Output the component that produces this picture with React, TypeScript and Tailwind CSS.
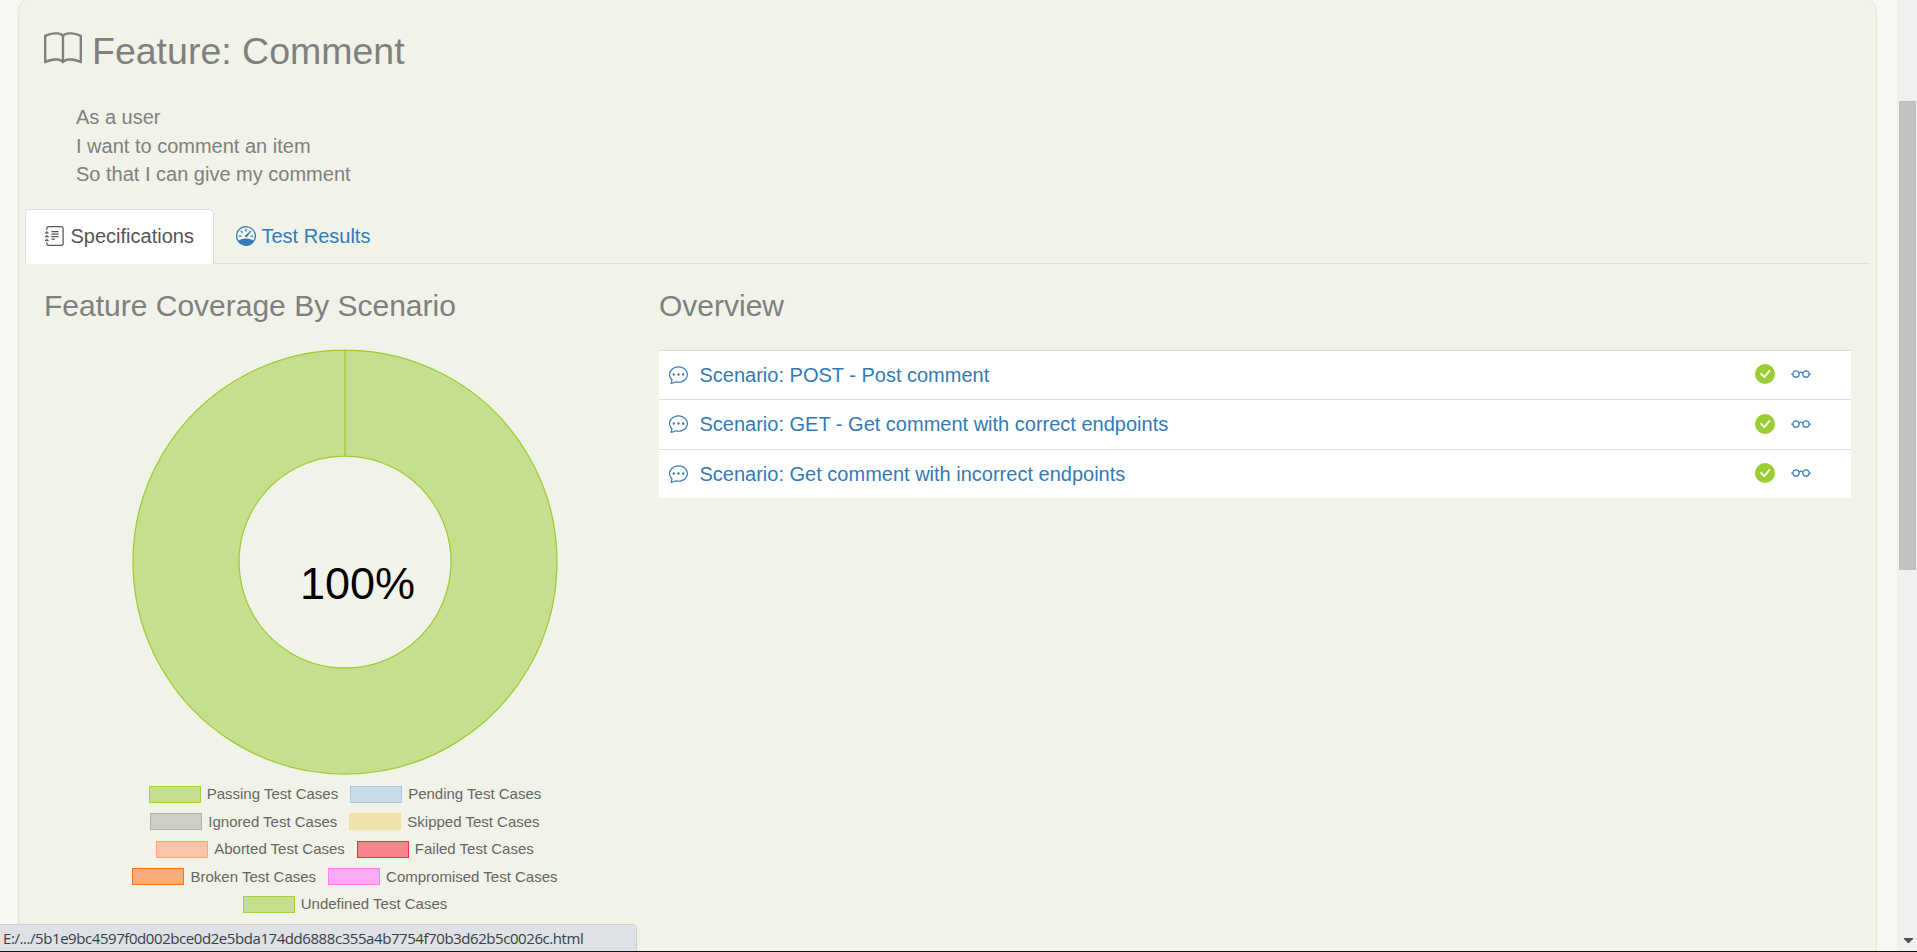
import React from "react";
import {
  BsBook,
  BsJournalText,
  BsSpeedometer,
  BsChatDots,
  BsCheckCircleFill,
  BsEyeglasses,
} from "react-icons/bs";

const scenarios = [
  "Scenario: POST - Post comment",
  "Scenario: GET - Get comment with correct endpoints",
  "Scenario: Get comment with incorrect endpoints",
];

const legend = [
  [
    { label: "Passing Test Cases", swatch: "bg-[#c6df8f] border-[#9fd23e]" },
    { label: "Pending Test Cases", swatch: "bg-[#cbdce9] border-[#a5c8ef]" },
  ],
  [
    { label: "Ignored Test Cases", swatch: "bg-[#cdcec8] border-[#b0b0ae]" },
    { label: "Skipped Test Cases", swatch: "bg-[#eee4ab] border-[#eee0a0]" },
  ],
  [
    { label: "Aborted Test Cases", swatch: "bg-[#f8c6a7] border-[#fea572]" },
    { label: "Failed Test Cases", swatch: "bg-[#f8858d] border-[#fb2a43]" },
  ],
  [
    { label: "Broken Test Cases", swatch: "bg-[#f8ab7b] border-[#fd6f1c]" },
    { label: "Compromised Test Cases", swatch: "bg-[#f9acf3] border-[#fc7cfb]" },
  ],
  [{ label: "Undefined Test Cases", swatch: "bg-[#c6df8f] border-[#9fd23e]" }],
];

function Coverage() {
  return (
    <section className="w-[615px] shrink-0 pl-[19px]">
      <h3 className="text-[30px] leading-[33px] text-[#808080]">Feature Coverage By Scenario</h3>
      <div className="mt-[27px] flex w-[602px] flex-col items-center">
        <svg width="426" height="426" viewBox="0 0 426 426" className="block">
          <path
            d="M213 1A212 212 0 1 1 212.99 1V107A106 106 0 1 0 213 107Z"
            fill="#c6df8f"
            stroke="#9acd32"
            strokeWidth="1.25"
          />
          <text x="168" y="250" fontSize="45" fill="#000" className="font-['Liberation_Sans',Arial,sans-serif]">
            100%
          </text>
        </svg>
        <div className="mt-[11px] flex flex-col items-center">
          {legend.map((row, i) => (
            <div key={i} className="flex h-[27.5px] items-start gap-[12px]">
              {row.map((item) => (
                <div key={item.label} className="flex items-center gap-[6px]">
                  <span className={`h-[17px] w-[52px] border ${item.swatch}`} />
                  <span className="whitespace-nowrap text-[15px] leading-[16px] text-[#666]">{item.label}</span>
                </div>
              ))}
            </div>
          ))}
        </div>
      </div>
    </section>
  );
}

function Overview() {
  return (
    <section className="min-w-0 flex-1 pl-[19px] pr-[19px]">
      <h3 className="text-[30px] leading-[33px] text-[#808080]">Overview</h3>
      <ul className="mt-[28px]">
        {scenarios.map((name) => (
          <li key={name} className="flex h-[49.5px] items-center border-t border-[#ddd] bg-white pl-[10px] text-[#337ab7]">
            <BsChatDots className="mb-px size-[19px]" />
            <a className="ml-[11.5px] flex-1 pt-px text-[20px] leading-[29px]">{name}</a>
            <BsCheckCircleFill className="mb-px size-[20px] text-[#9acd32]" />
            <BsEyeglasses className="mb-px ml-[16px] mr-[40px] size-[20px]" />
          </li>
        ))}
      </ul>
    </section>
  );
}

export default function App() {
  return (
    <div className="relative flex h-[952px] w-[1917px] overflow-hidden bg-[#f7f8f3] font-['Liberation_Sans',Arial,sans-serif]">
      <main className="ml-[18px] mt-[-3px] h-[970px] w-[1859px] shrink-0 rounded-t-[14px] border border-[#e3e4dc] bg-[#f1f2e8] px-[6px]">
        <div className="flex pl-[19px] pt-[31px] text-[#808080]">
          <BsBook className="mt-px size-[38px]" />
          <h2 className="ml-[10px] mt-[2px] text-[37.5px] leading-[41px]">Feature: Comment</h2>
        </div>
        <p className="mt-[31px] whitespace-pre-line pl-[51px] text-[20px] leading-[28.57px] text-[#808080]">
          {"As a user\nI want to comment an item\nSo that I can give my comment"}
        </p>
        <nav className="mt-[20px] flex h-[55px] border-b border-[#ddd] text-[20px] leading-[28px]">
          <a className="flex h-[55px] w-[189px] items-center rounded-t-[5px] border border-b-0 border-[#ddd] bg-white pb-[2px] pl-[19px] text-[#555]">
            <BsJournalText className="mr-[5.5px] size-[20px]" />
            Specifications
          </a>
          <a className="ml-[22px] flex items-center text-[#337ab7]">
            <BsSpeedometer className="mr-[5.5px] size-[20px]" />
            Test Results
          </a>
        </nav>
        <div className="mt-[25px] flex">
          <Coverage />
          <Overview />
        </div>
      </main>
      <aside className="ml-auto flex h-full w-[20px] flex-col items-center bg-[#f0f0f0] pt-[101px]">
        <div className="h-[469px] w-[17px] bg-[#c1c1c1]" />
        <svg width="9" height="5" viewBox="0 0 9 5" className="mb-[9px] ml-[2px] mt-auto">
          <path d="M0 0H9V1L5 5H4L0 1Z" fill="#505050" />
        </svg>
      </aside>
      <div className="absolute bottom-[1px] left-0 h-[27px] w-[637px] rounded-tr-[5px] border-r border-t border-[#cfd0cf] bg-[#dee1e6] pl-[3px] font-['Open_Sans','Noto_Sans',sans-serif] text-[15px] leading-[27px] text-[#3c4043]">
        <span className="whitespace-nowrap tracking-[-0.43px]">
          E:/.../5b1e9bc4597f0d002bce0d2e5bda174dd6888c355a4b7754f70b3d62b5c0026c.html
        </span>
      </div>
      <div className="absolute bottom-0 left-0 h-px w-full bg-[#111]" />
    </div>
  );
}
